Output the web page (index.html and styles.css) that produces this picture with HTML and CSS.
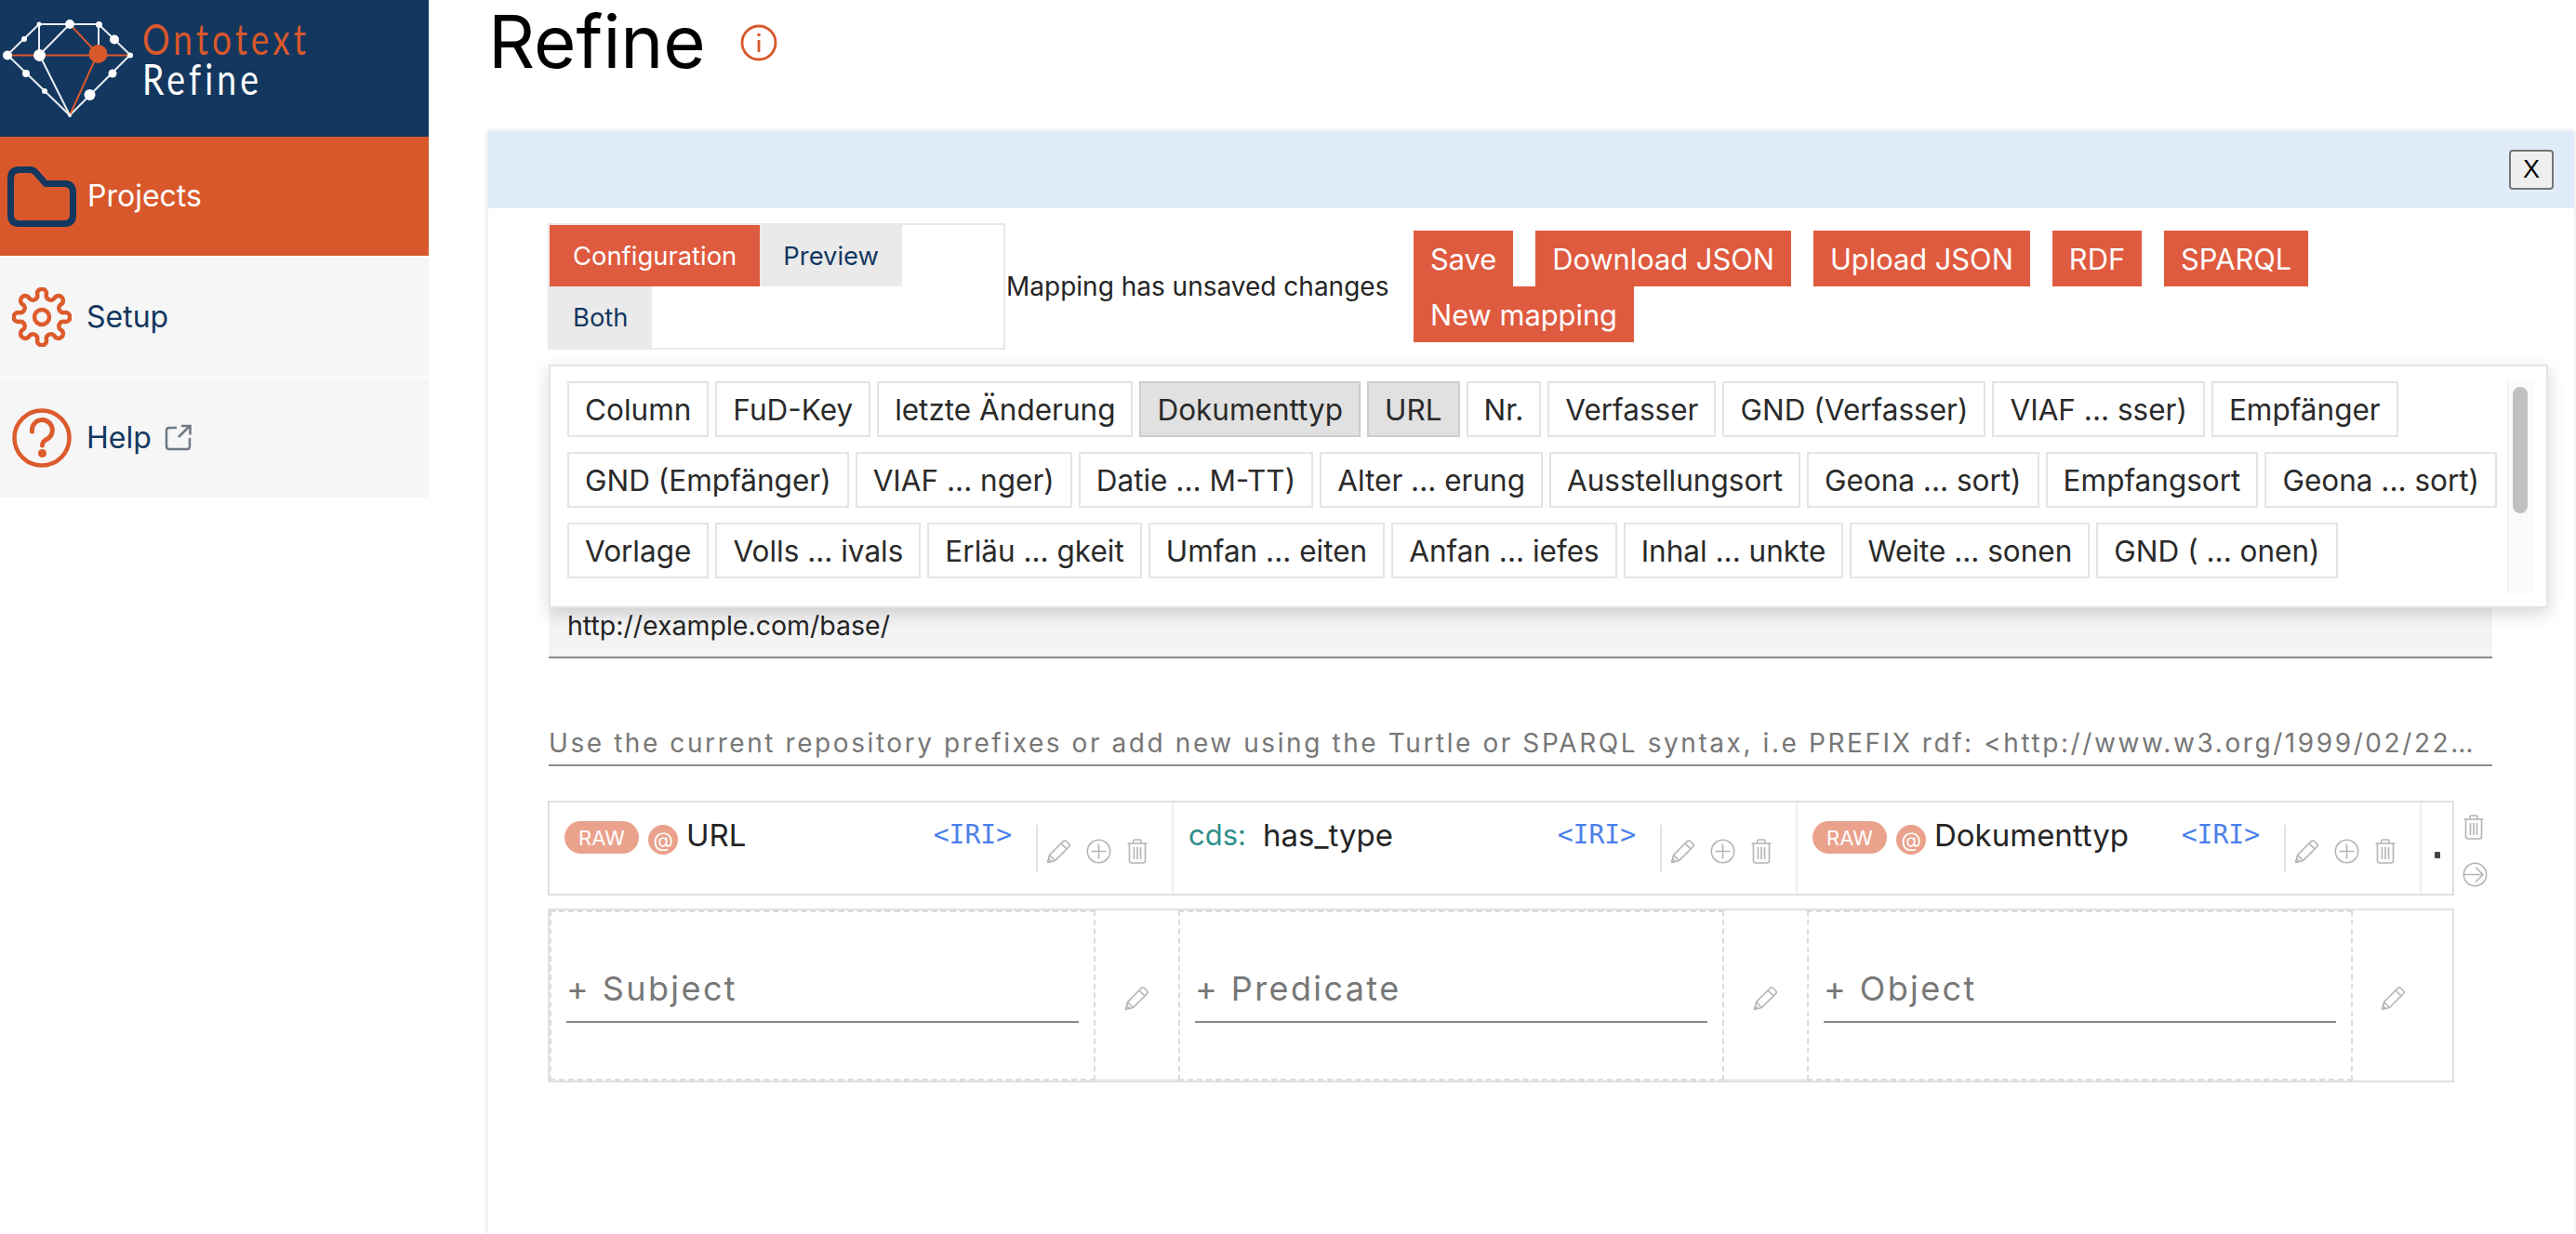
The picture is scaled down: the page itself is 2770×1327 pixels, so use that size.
FILE: index.html
```html
<!DOCTYPE html>
<html lang="en">
<head>
<meta charset="utf-8">
<title>Refine</title>
<link rel="stylesheet" href="styles.css">
</head>
<body>
<svg class="defs" width="0" height="0" aria-hidden="true">
  <symbol id="i-pencil" viewBox="0 0 27 27">
    <path d="M1.5 25.5 L3.5 17.5 L18.5 2.5 Q20 1 21.5 2.5 L24.5 5.5 Q26 7 24.5 8.5 L9.5 23.5 Z M16 5 L22 11 M3.5 17.5 L9.5 23.5 M2.5 21.5 L5.5 24.5" fill="none" stroke="#b4b4b4" stroke-width="1.6" stroke-linejoin="round"/>
  </symbol>
  <symbol id="i-plus" viewBox="0 0 27 27">
    <circle cx="13.5" cy="13.5" r="12.2" fill="none" stroke="#b4b4b4" stroke-width="1.6"/>
    <path d="M13.5 5.5 V21.5 M5.5 13.5 H21.5" fill="none" stroke="#b4b4b4" stroke-width="1.6"/>
  </symbol>
  <symbol id="i-trash" viewBox="0 0 24 27">
    <path d="M8 5 V2.5 Q8 1 9.5 1 H14.5 Q16 1 16 2.5 V5 M1.5 5 H22.5 M3.5 5 V23.5 Q3.5 26 6 26 H18 Q20.5 26 20.5 23.5 V5 M8.5 9 V22 M12 9 V22 M15.5 9 V22" fill="none" stroke="#b4b4b4" stroke-width="1.6"/>
  </symbol>
  <symbol id="i-next" viewBox="0 0 27 27">
    <circle cx="13.5" cy="13.5" r="12.2" fill="none" stroke="#b4b4b4" stroke-width="1.6"/>
    <path d="M1.5 13.5 H22 M14 5.5 L22 13.5 L14 21.5" fill="none" stroke="#b4b4b4" stroke-width="1.6"/>
  </symbol>
</svg>

<div class="app">
  <aside class="sidebar">
    <div class="brand">
      <svg class="logo" width="340" height="147" viewBox="0 0 340 147" role="img" aria-label="Ontotext Refine">
        <g fill="none" stroke="#e8edf2" stroke-width="2">
          <path d="M8 59 L42 26 H106 L140 59 L75 124 Z"/>
          <path d="M42 26 V59 M75 26 L42.5 59 M106 26 V58 M42.5 59 L75 124"/>
        </g>
        <g fill="none" stroke="#d8582b" stroke-width="2">
          <path d="M8 59.5 H140 M75 26 L105 58 L75 124"/>
        </g>
        <g fill="#fff">
          <circle cx="42" cy="26" r="2.5"/><circle cx="75" cy="26" r="5"/><circle cx="106.500" cy="26.500" r="3.500"/>
          <circle cx="8" cy="59.500" r="5"/><circle cx="140" cy="59.500" r="3"/><circle cx="75" cy="124" r="2"/>
          <circle cx="42.500" cy="59.500" r="6.500"/><circle cx="26" cy="42" r="3"/><circle cx="123" cy="42.500" r="5"/>
          <circle cx="28" cy="79" r="4"/><circle cx="48" cy="98" r="3"/><circle cx="121" cy="79" r="4.500"/><circle cx="96.500" cy="102" r="6"/>
        </g>
        <circle cx="105.500" cy="58" r="10" fill="#d8582b"/>
        <text class="logo-top" x="153" y="59" textLength="180" lengthAdjust="spacingAndGlyphs">Ontotext</text>
        <text class="logo-bottom" x="153" y="102" textLength="129" lengthAdjust="spacingAndGlyphs">Refine</text>
      </svg>
    </div>
    <nav class="nav">
      <a class="nav-item is-active">
        <svg class="nav-icon" width="74" height="65" viewBox="0 0 74 65"><path d="M13 3.500 H24 Q28 3.500 30.500 6.500 L41 18.500 H61 Q70.500 18.500 70.500 28 V52 Q70.500 61.500 61 61.500 H13 Q3.500 61.500 3.500 52 V13 Q3.500 3.500 13 3.500 Z" fill="none" stroke="#13375f" stroke-width="7" stroke-linejoin="round"/></svg>
        <span class="nav-label">Projects</span>
      </a>
      <a class="nav-item">
        <svg class="nav-icon gear" width="64" height="64" viewBox="0 0 64 64"><path d="M27.320 8.460 A5 5 0 1 1 36.680 8.460 A5 5 0 0 0 45.330 12.040 A5 5 0 1 1 51.960 18.670 A5 5 0 0 0 55.540 27.320 A5 5 0 1 1 55.540 36.680 A5 5 0 0 0 51.960 45.330 A5 5 0 1 1 45.330 51.960 A5 5 0 0 0 36.680 55.540 A5 5 0 1 1 27.320 55.540 A5 5 0 0 0 18.670 51.960 A5 5 0 1 1 12.040 45.330 A5 5 0 0 0 8.460 36.680 A5 5 0 1 1 8.460 27.320 A5 5 0 0 0 12.040 18.670 A5 5 0 1 1 18.670 12.040 A5 5 0 0 0 27.320 8.460 Z" fill="none" stroke="#dc5b2c" stroke-width="4.500"/><circle cx="32" cy="32" r="8" fill="none" stroke="#dc5b2c" stroke-width="4.500"/></svg>
        <span class="nav-label">Setup</span>
      </a>
      <a class="nav-item">
        <svg class="nav-icon gear" width="64" height="64" viewBox="0 0 64 64"><circle cx="32" cy="32" r="29.500" fill="none" stroke="#dc5b2c" stroke-width="4.500"/><path d="M21.500 25 A11 11 0 1 1 38 33 Q32.500 35.500 32.500 40" fill="none" stroke="#dc5b2c" stroke-width="5" stroke-linecap="round"/><circle cx="32.500" cy="48.500" r="4.500" fill="#dc5b2c"/></svg>
        <span class="nav-label">Help</span>
        <svg class="ext" width="29" height="29" viewBox="0 0 29 29"><path d="M13 4 H5 Q2 4 2 7 V24 Q2 27 5 27 H24 Q27 27 27 24 V15" fill="none" stroke="#6f7883" stroke-width="2.500"/><path d="M15 14 L26 3 M18 2 H27.500 V11.500" fill="none" stroke="#6f7883" stroke-width="2.500"/></svg>
      </a>
    </nav>
  </aside>

  <main class="main">
    <header class="page-head">
      <h1 class="page-title">Refine</h1>
      <svg class="info" width="40" height="40" viewBox="0 0 40 40"><circle cx="20" cy="20" r="18" fill="none" stroke="#d8582b" stroke-width="2.800"/><path d="M20 17 V30" stroke="#d8582b" stroke-width="2.800"/><circle cx="20" cy="11.500" r="1.800" fill="#d8582b"/></svg>
    </header>

    <section class="panel">
      <div class="panel-bar"><button class="close-btn">X</button></div>
      <div class="panel-body">
        <div class="toolbar">
          <div class="tabs">
            <span class="tab is-active">Configuration</span>
            <span class="tab">Preview</span>
            <span class="tab">Both</span>
          </div>
          <span class="unsaved">Mapping has unsaved changes</span>
          <div class="actions">
            <span class="action">Save</span>
            <span class="action">Download JSON</span>
            <span class="action">Upload JSON</span>
            <span class="action">RDF</span>
            <span class="action">SPARQL</span>
            <span class="action">New mapping</span>
          </div>
        </div>

        <div class="columns-pop">
          <div class="chips">
            <span class="chip">Column</span>
            <span class="chip">FuD-Key</span>
            <span class="chip">letzte Änderung</span>
            <span class="chip is-used">Dokumenttyp</span>
            <span class="chip is-used">URL</span>
            <span class="chip">Nr.</span>
            <span class="chip">Verfasser</span>
            <span class="chip">GND (Verfasser)</span>
            <span class="chip">VIAF ... sser)</span>
            <span class="chip">Empfänger</span>
            <span class="chip">GND (Empfänger)</span>
            <span class="chip">VIAF ... nger)</span>
            <span class="chip">Datie ... M-TT)</span>
            <span class="chip">Alter ... erung</span>
            <span class="chip">Ausstellungsort</span>
            <span class="chip">Geona ... sort)</span>
            <span class="chip">Empfangsort</span>
            <span class="chip">Geona ... sort)</span>
            <span class="chip">Vorlage</span>
            <span class="chip">Volls ... ivals</span>
            <span class="chip">Erläu ... gkeit</span>
            <span class="chip">Umfan ... eiten</span>
            <span class="chip">Anfan ... iefes</span>
            <span class="chip">Inhal ... unkte</span>
            <span class="chip">Weite ... sonen</span>
            <span class="chip">GND ( ... onen)</span>
          </div>
          <div class="scrolltrack"><div class="scrollthumb"></div></div>
        </div>

        <div class="base-field">http://example.com/base/</div>
        <div class="prefix-field">Use the current repository prefixes or add new using the Turtle or SPARQL syntax, i.e PREFIX rdf: &lt;http://www.w3.org/1999/02/22-rdf-syntax-ns#&gt;</div>

        <div class="triple-wrap">
          <div class="triple">
            <div class="cell">
              <span class="pill">RAW</span><span class="at">@</span><span class="value">URL</span>
              <span class="iri">&lt;IRI&gt;</span>
              <div class="cell-tools">
                <svg class="ti" width="27" height="27"><use href="#i-pencil"/></svg>
                <svg class="ti" width="27" height="27"><use href="#i-plus"/></svg>
                <svg class="ti" width="24" height="27"><use href="#i-trash"/></svg>
              </div>
            </div>
            <div class="cell">
              <span class="ns">cds:</span><span class="value">has_type</span>
              <span class="iri">&lt;IRI&gt;</span>
              <div class="cell-tools">
                <svg class="ti" width="27" height="27"><use href="#i-pencil"/></svg>
                <svg class="ti" width="27" height="27"><use href="#i-plus"/></svg>
                <svg class="ti" width="24" height="27"><use href="#i-trash"/></svg>
              </div>
            </div>
            <div class="cell">
              <span class="pill">RAW</span><span class="at">@</span><span class="value">Dokumenttyp</span>
              <span class="iri">&lt;IRI&gt;</span>
              <div class="cell-tools">
                <svg class="ti" width="27" height="27"><use href="#i-pencil"/></svg>
                <svg class="ti" width="27" height="27"><use href="#i-plus"/></svg>
                <svg class="ti" width="24" height="27"><use href="#i-trash"/></svg>
              </div>
            </div>
            <div class="cell-end"><span class="end-dot"></span></div>
          </div>
          <div class="triple-side">
            <svg width="24" height="27"><use href="#i-trash"/></svg>
            <svg width="27" height="27"><use href="#i-next"/></svg>
          </div>
        </div>

        <div class="blank-row">
          <div class="slot"><div class="slot-input">+ Subject</div></div>
          <div class="slot-edit"><svg width="27" height="27"><use href="#i-pencil"/></svg></div>
          <div class="slot"><div class="slot-input">+ Predicate</div></div>
          <div class="slot-edit"><svg width="27" height="27"><use href="#i-pencil"/></svg></div>
          <div class="slot"><div class="slot-input">+ Object</div></div>
          <div class="slot-edit is-last"><svg width="27" height="27"><use href="#i-pencil"/></svg></div>
        </div>
      </div>
    </section>
  </main>
</div>
</body>
</html>
```
FILE: styles.css
```css
* { box-sizing: border-box; }
html, body { margin: 0; padding: 0; height: 100%; background: #fff; overflow: hidden; }
body { font-family: Inter, "Liberation Sans", sans-serif; color: #252525; }
.defs { position: absolute; }

.app { display: flex; height: 1327px; }

/* sidebar */
.sidebar { width: 461px; flex: none; }
.brand { height: 147px; background: #13375f; }
.logo { display: block; }
.logo-top { font-family: Lato, sans-serif; font-weight: 400; font-size: 46px; letter-spacing: 5px; fill: #d8582b; }
.logo-bottom { font-family: Lato, sans-serif; font-weight: 400; font-size: 46px; letter-spacing: 5px; fill: #fff; }
.nav { display: flex; flex-direction: column; gap: 2px; }
.nav-item { display: flex; align-items: center; height: 128px; background: #f6f6f6; padding-left: 13px; color: #13375f; font-size: 32px; }
.nav-item.is-active { background: #d8582b; color: #fff; padding-left: 8px; }
.nav-item.is-active .nav-icon { margin-right: 12px; }
.nav-icon { flex: none; margin-right: 16px; }
.nav-label { line-height: 40px; }
.ext { margin-left: 14px; margin-top: -2px; }

/* main */
.main { flex: 1; min-width: 0; padding-left: 64px; padding-right: 2px; display: flex; flex-direction: column; }
.page-head { height: 141px; flex: none; display: flex; align-items: flex-start; }
.page-title { margin: 0; font-size: 78px; font-weight: 400; line-height: 90px; color: #000; }
.info { margin-left: 37px; margin-top: 26px; }

.panel { flex: 1; background: #fff; box-shadow: 0 0 6px rgba(0, 0, 0, .14); }
.panel-bar { height: 83px; background: #e0ecfa; display: flex; align-items: center; justify-content: flex-end; padding-right: 22px; }
.close-btn { width: 48px; height: 43px; padding: 0; background: #efefef; border: 2px solid #767676; border-radius: 4px; font-family: "Liberation Sans", sans-serif; font-size: 27px; color: #000; }
.panel-body { padding: 16px 0 0 64px; }

/* toolbar */
.toolbar { display: flex; align-items: center; }
.tabs { width: 492px; height: 136px; border: 2px solid #e9e9e9; display: flex; flex-wrap: wrap; align-content: flex-start; flex: none; }
.tab { height: 66px; padding: 0 25px; display: flex; align-items: center; background: #eaeaea; color: #13375f; font-size: 27.4px; }
.tab:nth-child(2) { margin-right: 20px; }
.tab.is-active { background: #df5b3f; color: #fff; }
.unsaved { font-size: 28px; width: 439px; flex: none; padding-left: 1px; color: #252525; }
.actions { display: flex; flex-wrap: wrap; column-gap: 24px; width: 1100px; }
.action { height: 60px; padding: 0 18px; display: flex; align-items: center; background: #df5b3f; color: #fff; font-size: 30.8px; }

/* column chips */
.columns-pop { position: relative; z-index: 2; width: 2150px; height: 262px; margin: 16px 0 0 1px; background: #fff; border: 2px solid #e4e4e4; box-shadow: 0 6px 18px rgba(0, 0, 0, .16); padding: 16px 44px 16px 18px; display: flex; }
.chips { flex: 1; height: 228px; overflow: hidden; display: flex; flex-wrap: wrap; align-content: flex-start; gap: 16px 7px; }
.chip { height: 60px; padding: 0 17px; display: flex; align-items: center; border: 2px solid #e4e4e4; background: #fff; color: #2a2a2a; font-size: 31.5px; }
.chip.is-used { background: #e1e1e1; border-color: #cdcdcd; }
.scrolltrack { position: absolute; top: 16px; right: 14px; width: 28px; height: 228px; background: #fafafa; border-left: 1px solid #eee; padding: 6px 5px; }
.scrollthumb { width: 16px; height: 136px; border-radius: 8px; background: #c1c1c1; }

/* fields */
.base-field { width: 2090px; height: 54px; margin-left: 1px; background: #f4f4f4; border-bottom: 2px solid #8b8b8b; padding: 3px 20px 0; font-size: 28.5px; line-height: 32px; color: #252525; }
.prefix-field { width: 2090px; height: 56px; margin: 60px 0 0 1px; border-bottom: 2px solid #8b8b8b; padding: 16px 14px 0 0; font-size: 28px; line-height: 30px; letter-spacing: 2.58px; color: #777; white-space: nowrap; overflow: hidden; text-overflow: ellipsis; }

/* triple row */
.triple-wrap { display: flex; margin-top: 37px; }
.triple { width: 2050px; height: 102px; border: 2px solid #e0e0e0; display: flex; }
.cell { width: 671px; flex: none; display: flex; align-items: flex-start; padding: 20px 0 0 16px; border-right: 2px solid #eee; }
.pill { width: 80px; height: 35px; border-radius: 18px; background: #eaa28c; color: #fff; font-size: 22px; display: flex; align-items: center; justify-content: center; }
.at { width: 32px; height: 32px; margin: 4px 9px 0 10px; border-radius: 50%; background: #eaa28c; color: #fff; font-size: 22px; display: flex; align-items: center; justify-content: center; }
.value { font-size: 33px; line-height: 30px; color: #252525; }
.ns { font-size: 31px; line-height: 30px; color: #2f8f8b; margin-right: 18px; }
.iri { margin-left: auto; font-family: "DejaVu Sans Mono", monospace; font-size: 28px; line-height: 30px; color: #4a80ea; }
.cell-tools { width: 146px; height: 51px; flex: none; margin: 4px 0 0 26px; padding: 15px 0 0 9px; border-left: 2px solid #e4e4e4; display: flex; gap: 16px; }
.ti { flex: none; }
.cell-end { flex: 1; display: flex; justify-content: center; padding-top: 53px; }
.end-dot { width: 6px; height: 7px; background: #444; border-radius: 1px; }
.triple-side { display: flex; flex-direction: column; gap: 24px; padding: 15px 0 0 9px; }

/* blank row */
.blank-row { width: 2050px; height: 187px; margin-top: 14px; border: 2px solid #e0e0e0; display: flex; }
.slot { width: 587px; flex: none; border: 2px dashed #dcdcdc; padding: 59px 16px 0; }
.slot-input { height: 60px; border-bottom: 2px solid #8b8b8b; font-size: 36px; line-height: 46px; letter-spacing: 2.4px; color: #777; }
.slot-edit { width: 89px; flex: none; display: flex; justify-content: center; padding: 81px 0 0; border-bottom: 2px solid #eee; }
.slot-edit.is-last { flex: 1; justify-content: flex-start; padding-left: 30px; border-bottom: 0; }
```
